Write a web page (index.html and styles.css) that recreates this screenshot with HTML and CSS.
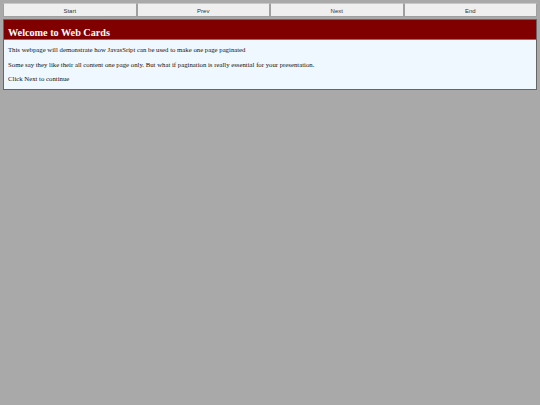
FILE: index.html
```html
<!DOCTYPE html>
<html>
<head>
<meta charset="utf-8">
<link rel="stylesheet" href="styles.css">
</head>
<body>
<nav class="pager">
  <button class="btn">Start</button>
  <button class="btn">Prev</button>
  <button class="btn">Next</button>
  <button class="btn">End</button>
</nav>
<section class="card">
  <h1 class="card-title">Welcome to Web Cards</h1>
  <div class="card-body">
    <p>This webpage will demonstrate how JavasSript can be used to make one page paginated</p>
    <p>Some say they like their all content one page only. But what if pagination is really essential for your presentation.</p>
    <p>Click Next to continue</p>
  </div>
</section>
</body>
</html>
```
FILE: styles.css
```css
html, body {
  margin: 0;
  padding: 0;
  background: #a9a9a9;
}
body {
  padding: 3px;
  font-family: "Liberation Serif", serif;
}
.pager {
  display: flex;
  height: 14px;
}
.btn {
  flex: 1;
  margin: 0;
  padding: 1px 0 0;
  background: #efefef;
  border: 1px solid #a0a0a0;
  border-top-color: #c8c8c8;
  font-family: "Liberation Sans", sans-serif;
  font-size: 6px;
  color: #333;
}
.card {
  margin-top: 2px;
  border: 1px solid #666;
  background: #f0f8ff;
}
.card-title {
  margin: 0;
  background: #800000;
  color: #fff;
  font-size: 10.2px;
  font-weight: bold;
  height: 13px;
  line-height: 13px;
  padding: 6px 0 0 4px;
  border-bottom: 1px solid #b06060;
}
.card-body {
  padding: 6px 4px 6px;
  font-size: 6.75px;
  color: #111;
}
.card-body p {
  margin: 0 0 6.5px;
  line-height: 8px;
}
.card-body p:last-child {
  margin-bottom: 0;
}
```
